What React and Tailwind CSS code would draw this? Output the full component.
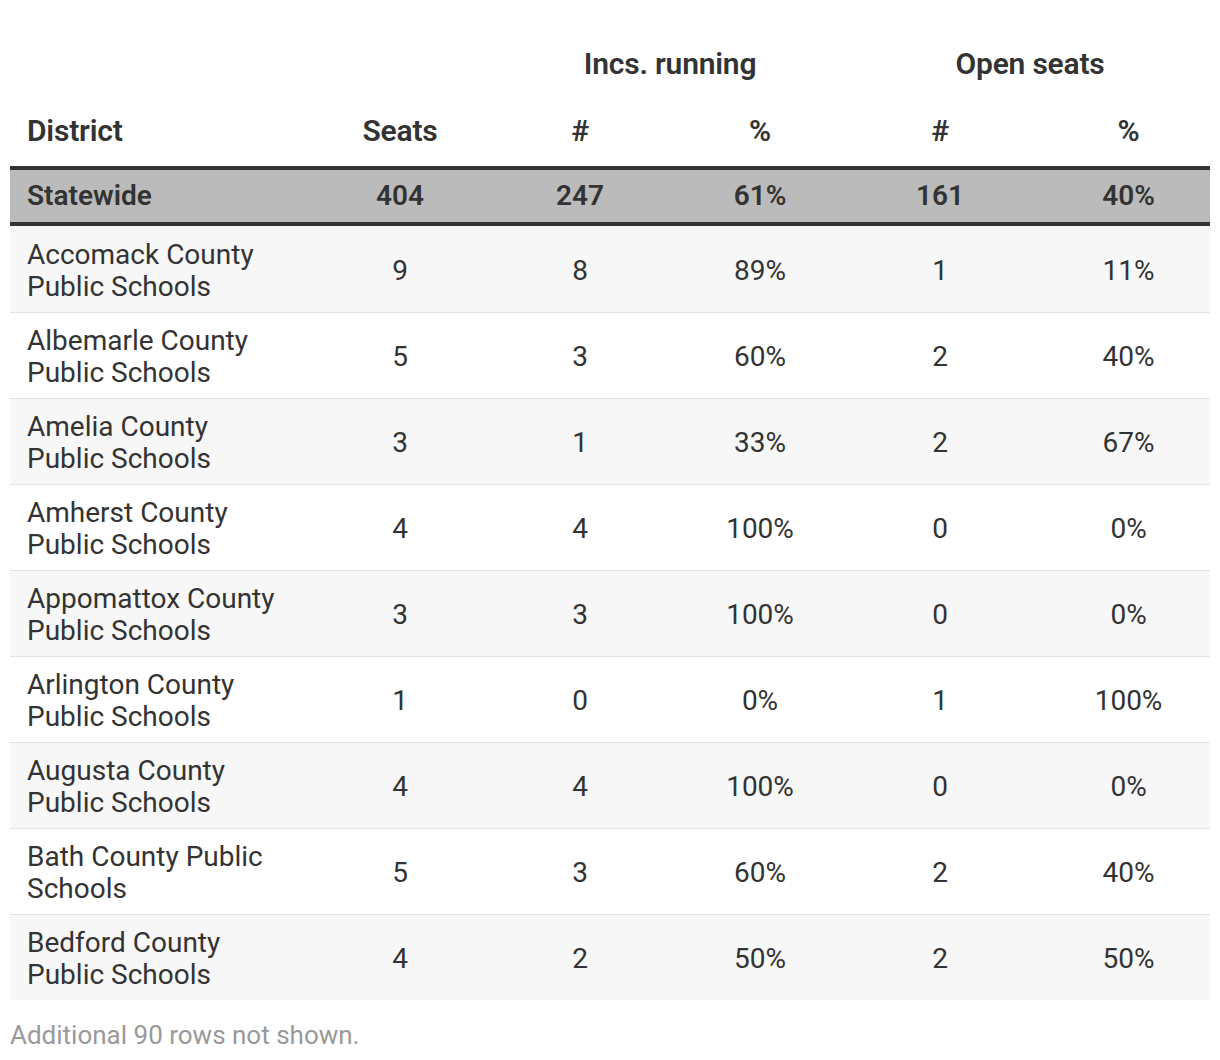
import React from 'react';

const rows = [
    ['Accomack County Public Schools', 9, 8, '89%', 1, '11%'],
    ['Albemarle County Public Schools', 5, 3, '60%', 2, '40%'],
    ['Amelia County Public Schools', 3, 1, '33%', 2, '67%'],
    ['Amherst County Public Schools', 4, 4, '100%', 0, '0%'],
    ['Appomattox County Public Schools', 3, 3, '100%', 0, '0%'],
    ['Arlington County Public Schools', 1, 0, '0%', 1, '100%'],
    ['Augusta County Public Schools', 4, 4, '100%', 0, '0%'],
    ['Bath County Public Schools', 5, 3, '60%', 2, '40%'],
    ['Bedford County Public Schools', 4, 2, '50%', 2, '50%'],
];

const App = () => {
    return (
        <div className="bg-white min-h-[1060px] px-[10px] pt-[42px] text-[#333]" style={{ fontFamily: 'Roboto, "Liberation Sans", sans-serif' }}>
            <table className="w-[1200px] border-collapse table-fixed">
                <colgroup>
                    <col className="w-[300px]" />
                    <col className="w-[180px]" />
                    <col className="w-[180px]" />
                    <col className="w-[180px]" />
                    <col className="w-[180px]" />
                    <col className="w-[180px]" />
                </colgroup>
                <thead>
                    <tr className="h-[42px] text-[30px] leading-[35px] font-semibold tracking-[-0.2px]">
                        <th></th>
                        <th></th>
                        <th colSpan={2} className="text-center align-middle font-semibold">Incs. running</th>
                        <th colSpan={2} className="text-center align-middle font-semibold">Open seats</th>
                    </tr>
                    <tr className="h-[84px] text-[30px] leading-[35px] font-semibold tracking-[-0.2px] border-b-[4px] border-[#333]">
                        <th className="text-left pl-[17px] pb-[18px] align-bottom font-semibold">District</th>
                        <th className="text-center pb-[18px] align-bottom font-semibold">Seats</th>
                        <th className="text-center pb-[18px] align-bottom font-semibold">#</th>
                        <th className="text-center pb-[18px] align-bottom font-semibold">%</th>
                        <th className="text-center pb-[18px] align-bottom font-semibold">#</th>
                        <th className="text-center pb-[18px] align-bottom font-semibold pl-[17px]">%</th>
                    </tr>
                </thead>
                <tbody>
                    <tr className="h-[56px] bg-[#bbbbbb] text-[28px] font-semibold border-b-[4px] border-[#333]">
                        <td className="pl-[17px]">Statewide</td>
                        <td className="text-center">404</td>
                        <td className="text-center">247</td>
                        <td className="text-center">61%</td>
                        <td className="text-center">161</td>
                        <td className="text-center pl-[17px]">40%</td>
                    </tr>
                    {rows.map((r, idx) => (
                        <tr key={idx} className={`${idx === 0 ? 'h-[88px]' : 'h-[86px]'} text-[28px] leading-[32px] ${idx % 2 === 0 ? 'bg-[#f7f7f7]' : 'bg-white'} ${idx < rows.length - 1 ? 'border-b border-[#e3e3e3]' : ''}`}>
                            <td className="pl-[17px] pr-[30px] pt-[4px]">{r[0]}</td>
                            <td className="text-center pt-[4px]">{r[1]}</td>
                            <td className="text-center pt-[4px]">{r[2]}</td>
                            <td className="text-center pt-[4px]">{r[3]}</td>
                            <td className="text-center pt-[4px]">{r[4]}</td>
                            <td className="text-center pl-[17px] pt-[4px]">{r[5]}</td>
                        </tr>
                    ))}
                </tbody>
            </table>
            <div className="mt-[20px] text-[26px] leading-[30px] text-[#999]">Additional 90 rows not shown.</div>
        </div>
    );
};

export default App;
